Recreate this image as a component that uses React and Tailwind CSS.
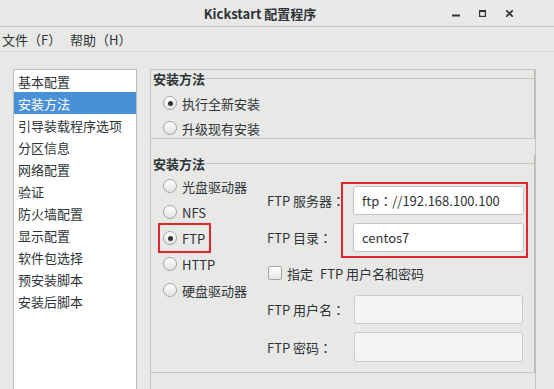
import React from 'react';

const Radio = ({ checked }) => (
  <span className="w-[14px] h-[14px] rounded-full border border-[#a3a3a0] bg-linear-to-b from-white to-[#e2e2e0] flex items-center justify-center shrink-0">
    {checked && <span className="w-[5px] h-[5px] rounded-full bg-[#2e3436]" />}
  </span>
);

const RadioRow = ({ checked, label, className = '' }) => (
  <div className={`flex items-center gap-[5px] ${className}`}>
    <Radio checked={checked} />
    <span className="whitespace-nowrap">{label}</span>
  </div>
);

// full-width colon, centred like the reference
const Colon = () => <span className="font-['Noto_Sans_CJK_TC',sans-serif]">：</span>;

const menuItems = ['基本配置', '安装方法', '引导装载程序选项', '分区信息', '网络配置', '验证', '防火墙配置', '显示配置', '软件包选择', '预安装脚本', '安装后脚本'];

const App = () => {
  return (
    <div className="w-[554px] h-[389px] overflow-hidden bg-[#e8e8e7] text-[13px] leading-none text-[#2e3436] font-['Noto_Sans_CJK_SC','DejaVu_Sans',sans-serif]">
      {/* title bar */}
      <div className="h-[27px] flex items-center border-b border-[#c3c3c1]">
        <div className="w-[78px]" />
        <div className="flex-1 text-center font-bold text-[13px]">Kickstart 配置程序</div>
        <div className="w-[112px] pr-[31px] flex items-center">
          <span className="w-[27px] flex justify-center">
            <svg width="8" height="8" viewBox="0 0 8 8"><rect x="0" y="5.5" width="8" height="2" fill="#2e3436" /></svg>
          </span>
          <span className="w-[27px] flex justify-center">
            <svg width="7" height="7" viewBox="0 0 7 7"><rect x="0.6" y="1" width="5.8" height="5.4" fill="none" stroke="#2e3436" strokeWidth="1.2" /><rect x="0" y="0" width="7" height="2" fill="#2e3436" /></svg>
          </span>
          <span className="w-[27px] flex justify-center">
            <svg width="7" height="7" viewBox="0 0 7 7"><path d="M0.8 0.8 L6.2 6.2 M6.2 0.8 L0.8 6.2" stroke="#2e3436" strokeWidth="1.7" strokeLinecap="round" /></svg>
          </span>
        </div>
      </div>

      {/* menu bar */}
      <div className="h-[25px] flex items-center border-b border-[#d6d6d4]">
        <span className="w-[70px] pl-[2px] whitespace-nowrap">文件（F）</span>
        <span className="whitespace-nowrap">帮助（H）</span>
      </div>

      {/* body */}
      <div className="h-[337px] flex gap-[13px] pt-[17px] pl-[13px]">
        <div className="w-[124px] h-full border border-b-0 border-[#bdbdba] bg-white">
          {menuItems.map((item, i) => (
            <div
              key={item}
              className={`h-[22px] flex items-center pl-[4px] whitespace-nowrap ${i === 1 ? 'bg-[#4a90d9] text-white' : ''}`}
            >
              {item}
            </div>
          ))}
        </div>

        <div className="w-[386px] h-full border border-b-0 border-[#c4c4c1]">
          {/* section 1 */}
          <div className="border-b border-r border-[#c4c4c1] border-r-[#b8b8b5]">
            <div className="h-[16px] flex items-center pl-[2px]">
              <span className="font-bold whitespace-nowrap">安装方法</span>
              <div className="flex-1 h-px bg-[#c4c4c1]" />
            </div>
            <div className="mt-[7px] pl-[12px] flex flex-col gap-[5px]">
              <RadioRow checked label="执行全新安装" className="h-[20px]" />
              <RadioRow label="升级现有安装" className="h-[20px]" />
            </div>
          </div>

          {/* section 2 */}
          <div className="mt-[16px] border-b border-r border-[#c4c4c1] border-r-[#b8b8b5]">
            <div className="h-[16px] flex items-center pl-[2px]">
              <span className="font-bold whitespace-nowrap">安装方法</span>
              <div className="flex-1 h-px bg-[#c4c4c1]" />
            </div>
            <div className="flex items-start">
              <div className="w-[116px] pt-[2px] pl-[12px] flex flex-col">
                <RadioRow label="光盘驱动器" className="h-[26px]" />
                <RadioRow label="NFS" className="h-[26px]" />
                <div className="h-[30px] -my-[2px] -ml-[5px] w-[53px] border-2 border-[#e3262b] flex items-center pl-[3px]">
                  <RadioRow checked label="FTP" />
                </div>
                <RadioRow label="HTTP" className="h-[26px]" />
                <RadioRow label="硬盘驱动器" className="h-[26px]" />
              </div>

              <div className="mt-[11px] pb-[10px] flex flex-col">
                <div className="flex">
                  <div className="w-[74px] pt-[4px] flex flex-col gap-[8px]">
                    <div className="h-[29px] flex items-center whitespace-nowrap">FTP 服务器<Colon /></div>
                    <div className="h-[29px] flex items-center whitespace-nowrap">FTP 目录<Colon /></div>
                  </div>
                  <div className="w-[187px] border-2 border-[#e3262b] pt-[2px] pb-[4px] pl-[10px] pr-[2px] flex flex-col gap-[8px]">
                    <div className="h-[29px] rounded-[3px] border border-[#c4c4c1] bg-white px-[8px] flex items-center whitespace-nowrap">ftp<Colon />//192.168.100.100</div>
                    <div className="h-[29px] rounded-[3px] border border-[#c4c4c1] bg-white px-[8px] flex items-center">centos7</div>
                  </div>
                </div>

                <div className="mt-[8px] h-[14px] pl-[1px] flex items-center">
                  <span className="w-[14px] h-[14px] rounded-[2px] border border-[#a3a3a0] bg-linear-to-b from-white to-[#e6e6e4] shrink-0" />
                  <span className="ml-[5px] whitespace-nowrap">指定</span>
                  <span className="ml-[7px] whitespace-nowrap">FTP 用户名和密码</span>
                </div>

                <div className="mt-[15px] flex">
                  <div className="w-[87px] flex flex-col gap-[8px]">
                    <div className="h-[29px] flex items-center whitespace-nowrap">FTP 用户名<Colon /></div>
                    <div className="h-[30px] flex items-center whitespace-nowrap">FTP 密码<Colon /></div>
                  </div>
                  <div className="flex flex-col gap-[8px]">
                    <div className="w-[169px] h-[29px] rounded-[3px] border border-[#cbcbc8] bg-[#f4f4f3]" />
                    <div className="w-[169px] h-[30px] rounded-[3px] border border-[#cbcbc8] bg-[#f4f4f3]" />
                  </div>
                </div>
              </div>
            </div>
          </div>
        </div>
      </div>
    </div>
  );
};

export default App;
